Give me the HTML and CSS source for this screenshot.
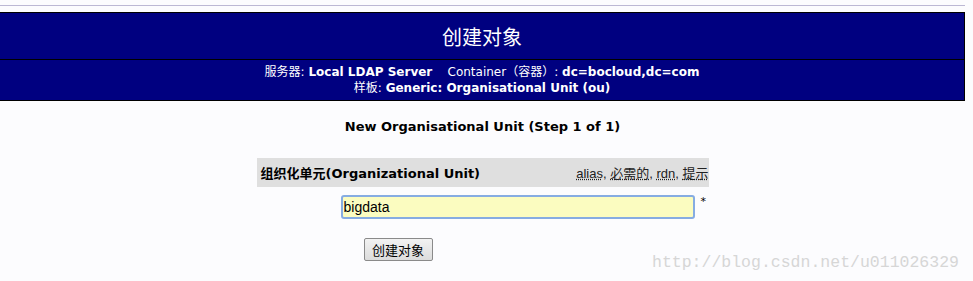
FILE: index.html
```html
<!DOCTYPE html>
<html lang="zh-CN">
<head>
    <meta charset="UTF-8">
    <title>创建对象</title>
    <link rel="stylesheet" href="styles.css">
</head>
<body>
    <div class="page">
        <div class="topline"></div>

        <div class="head">
            <div class="head-title">创建对象</div>
            <div class="head-info">
                <div>服务器: <b>Local LDAP Server</b>&nbsp;&nbsp;&nbsp; Container（容器）: <b>dc=bocloud,dc=com</b></div>
                <div>样板: <b>Generic: Organisational Unit (ou)</b></div>
            </div>
        </div>

        <div class="step">New Organisational Unit (Step 1 of 1)</div>

        <div class="form">
            <div class="attr-row">
                <span class="attr-name">组织化单元(Organizational Unit)</span>
                <span class="attr-hints"><u>alias</u>, <u>必需的</u>, <u>rdn</u>, <u>提示</u></span>
            </div>
            <div class="value-row">
                <input class="value" type="text" value="bigdata" spellcheck="true">
                <span class="req">*</span>
            </div>
            <div class="submit-row">
                <button class="button">创建对象</button>
            </div>
        </div>

        <div class="watermark">http://blog.csdn.net/u011026329</div>
    </div>
</body>
</html>
```

FILE: styles.css
```css
body {
    margin: 0;
    background: #fcfcfe;
    font-family: "DejaVu Sans", Verdana, "Noto Sans CJK SC", sans-serif;
    font-size: 13px;
    color: #000;
}
.page {
    width: 965px;
    position: relative;
    height: 281px;
}
.topline {
    height: 1px;
    margin-top: 5px;
    background: #bcb8d4;
}
.head {
    margin-top: 6px;
    background: #000080;
    color: #fff;
    border: 1px solid #000;
    border-left: none;
    text-align: center;
}
.head-title {
    height: 46px;
    line-height: 48px;
    font-size: 20px;
    font-family: "Noto Sans CJK SC", sans-serif;
    border-bottom: 1px solid #000;
}
.head-info {
    padding: 4px 0 4px;
    line-height: 16px;
    font-size: 12px;
}
.step {
    margin-top: 18px;
    text-align: center;
    font-weight: bold;
    font-size: 13px;
}
.form {
    width: 452px;
    margin: 24px auto 0;
}
.attr-row {
    display: flex;
    justify-content: space-between;
    align-items: center;
    height: 29px;
    padding-left: 4px;
    background: #dfdfdf;
    white-space: nowrap;
}
.attr-name {
    font-weight: bold;
}
.attr-hints {
    font-family: "Liberation Sans", Arial, "Noto Sans CJK SC", sans-serif;
    font-size: 13px;
    color: #222;
}
.attr-hints u {
    text-decoration-style: dotted;
}
.value-row {
    display: flex;
    align-items: flex-start;
    margin-top: 8px;
    padding-left: 84px;
}
.value {
    box-sizing: border-box;
    width: 354px;
    height: 24px;
    padding: 0 1px;
    border: 2px solid #86ace2;
    border-radius: 3px;
    background: #fbfcc0;
    font-family: "Liberation Sans", Arial, sans-serif;
    font-size: 14px;
    text-decoration: underline wavy #e33;
    text-underline-offset: 3px;
    text-decoration-thickness: 1px;
    outline: none;
}
.req {
    margin-left: 6px;
    font-size: 11px;
    line-height: 14px;
}
.submit-row {
    margin-top: 19px;
    padding-left: 107px;
}
.button {
    width: 69px;
    height: 23px;
    padding: 0;
    border: 1px solid #8a8a8a;
    border-radius: 2px;
    background: linear-gradient(#f2f2f2, #dcdcdc);
    font-family: "Noto Sans CJK SC", sans-serif;
    font-size: 13px;
    color: #000;
}
.watermark {
    position: absolute;
    left: 652px;
    top: 248px;
    font-family: "Liberation Mono", monospace;
    font-size: 16.5px;
    color: #d6d6d6;
    white-space: nowrap;
}
```
